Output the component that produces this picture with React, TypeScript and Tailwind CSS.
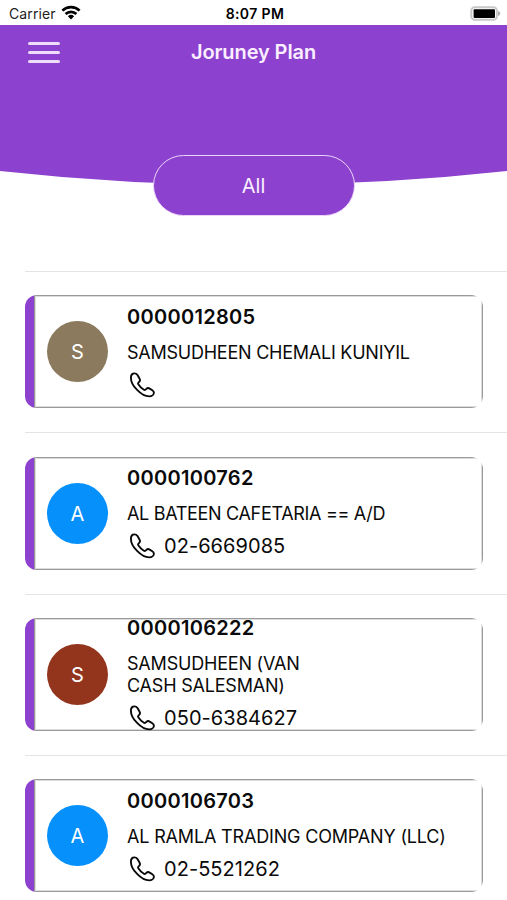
type Customer = {
  code: string;
  name: string;
  phone?: string;
  avatarClass: string;
  nameClass: string;
};

const customers: Customer[] = [
  {
    code: "0000012805",
    name: "SAMSUDHEEN CHEMALI KUNIYIL",
    avatarClass: "bg-[#8b7a5e]",
    nameClass: "tracking-[-0.24px]",
  },
  {
    code: "0000100762",
    name: "AL BATEEN CAFETARIA == A/D",
    phone: "02-6669085",
    avatarClass: "bg-[#0590fc]",
    nameClass: "tracking-[-0.32px]",
  },
  {
    code: "0000106222",
    name: "SAMSUDHEEN (VAN CASH SALESMAN)",
    phone: "050-6384627",
    avatarClass: "bg-[#93351c]",
    nameClass: "w-[200px] tracking-[-0.2px]",
  },
  {
    code: "0000106703",
    name: "AL RAMLA TRADING COMPANY (LLC)",
    phone: "02-5521262",
    avatarClass: "bg-[#0590fc]",
    nameClass: "tracking-[-0.17px]",
  },
];

function WifiIcon() {
  return (
    <svg width="20" height="15" viewBox="0 0 20 15" fill="none" stroke="#000" strokeWidth="2.7" className="-mt-[2px]">
      <path d="M1.4 5.6a12.4 12.4 0 0 1 17.2 0" />
      <path d="M4.6 9a7.8 7.8 0 0 1 10.8 0" />
      <path d="M10 14.4 6.9 11.3a4.5 4.5 0 0 1 6.2 0z" fill="#000" stroke="none" />
    </svg>
  );
}

function BatteryIcon() {
  return (
    <svg width="31" height="15" viewBox="0 0 31 15">
      <rect x="1.3" y="1.3" width="25.6" height="12.4" rx="3.5" fill="#fff" stroke="#c8c8c8" strokeWidth="2" />
      <rect x="3.6" y="3.2" width="21.4" height="8.8" rx="1" fill="#000" />
      <path d="M28 5c3 1 3 4 0 5z" fill="#b0b0b0" />
    </svg>
  );
}

function PhoneIcon() {
  return (
    <svg
      width="26"
      height="26"
      viewBox="0 0 26 26"
      fill="none"
      stroke="#0a0a0a"
      strokeWidth="1.9"
      strokeLinejoin="round"
      className="shrink-0"
    >
      <path d="M5.500 1.400C3.400 1.400 1.900 3.200 1.900 5.700c0 3.800 2.500 8.600 6.200 12.200 3.700 3.800 8.400 6.500 12.100 6.500 2.500 0 4.700-1.600 4.700-3.600 0-1.100-.6-1.800-1.600-2.500l-2.600-1.700c-1.300-.9-2.300-.8-3.300.2l-.9.900c-.5.500-1 .5-1.600.1-2-1.300-4.300-3.600-5.600-5.600-.4-.6-.4-1.100.1-1.600l.8-.8c1-1 1.100-2 .3-3.300L8.500 3C7.700 1.900 6.800 1.400 5.500 1.400z" />
    </svg>
  );
}

function StatusBar() {
  return (
    <div className="grid h-[25px] grid-cols-3 items-center pt-[2px] pr-[6px] pl-[9px] text-black">
      <div className="flex items-center gap-[5px]">
        <span className="text-[14px] tracking-[0.1px] text-[#222]">Carrier</span>
        <WifiIcon />
      </div>
      <span className="text-center text-[14px] font-semibold tracking-[0.4px]">8:07 PM</span>
      <div className="flex justify-end">
        <BatteryIcon />
      </div>
    </div>
  );
}

function CustomerCard({ customer }: { customer: Customer }) {
  return (
    <div className="h-[161.3px] border-t border-[#e4e4e4] pt-[23.3px]">
      <div className="flex h-[113px] w-[458px] overflow-hidden rounded-[12px] bg-[linear-gradient(to_right,#8c42ce_20px,#fff_20px)]">
        <div className="ml-[9px] flex flex-1 items-center border border-[#999] bg-white pl-[12px] shadow-[inset_0_0_0_1px_#dcdcdc]">
          <div
            className={`flex size-[61px] shrink-0 items-center justify-center rounded-full pt-px text-[20px] text-white ${customer.avatarClass}`}
          >
            {customer.name[0]}
          </div>
          <div className="ml-[19px] flex h-full flex-1 flex-col justify-center pt-[1px] whitespace-nowrap text-[#0a0a0a]">
            <p className="shrink-0 text-[20px] leading-[20px] font-semibold tracking-[0.3px]">{customer.code}</p>
            <p className={`mt-[15px] shrink-0 text-[18px] leading-[22px] whitespace-normal ${customer.nameClass}`}>
              {customer.name}
            </p>
            <div className="mt-[8px] flex h-[26px] shrink-0 items-center gap-[9px] pl-[2px]">
              <PhoneIcon />
              <span className="text-[20px] leading-[24px] tracking-[0.05px]">{customer.phone}</span>
            </div>
          </div>
        </div>
      </div>
    </div>
  );
}

export default function App() {
  return (
    <main className="h-[900px] w-[507px] overflow-hidden bg-white font-['Inter',sans-serif]">
      <StatusBar />
      <header className="h-[146px] bg-[#8c42ce]">
        <div className="grid grid-cols-[1fr_auto_1fr] items-center pt-[15px]">
          <button aria-label="Menu" className="ml-[28px] flex w-[32px] flex-col gap-[6px]">
            <span className="h-[3px] rounded-full bg-[#eedcfb]" />
            <span className="h-[3px] rounded-full bg-[#eedcfb]" />
            <span className="h-[3px] rounded-full bg-[#eedcfb]" />
          </button>
          <h1 className="text-[20px] leading-[24px] font-semibold tracking-[-0.1px] text-[#fbeeff]">Joruney Plan</h1>
        </div>
      </header>
      <svg width="507" height="15" viewBox="0 0 507 15" className="block">
        <path d="M0 0Q253.500 28 507 0z" fill="#8c42ce" />
      </svg>
      <div className="relative -mt-[31px] flex justify-center">
        <button className="h-[61px] w-[202px] rounded-full border-[1.5px] border-[#ecd5fb] bg-[#8c42ce] pt-[1px] text-[20px] text-[#fbeeff]">
          All
        </button>
      </div>
      <section className="mt-[55px] pl-[25px]">
        {customers.map((customer) => (
          <CustomerCard key={customer.code} customer={customer} />
        ))}
      </section>
    </main>
  );
}
